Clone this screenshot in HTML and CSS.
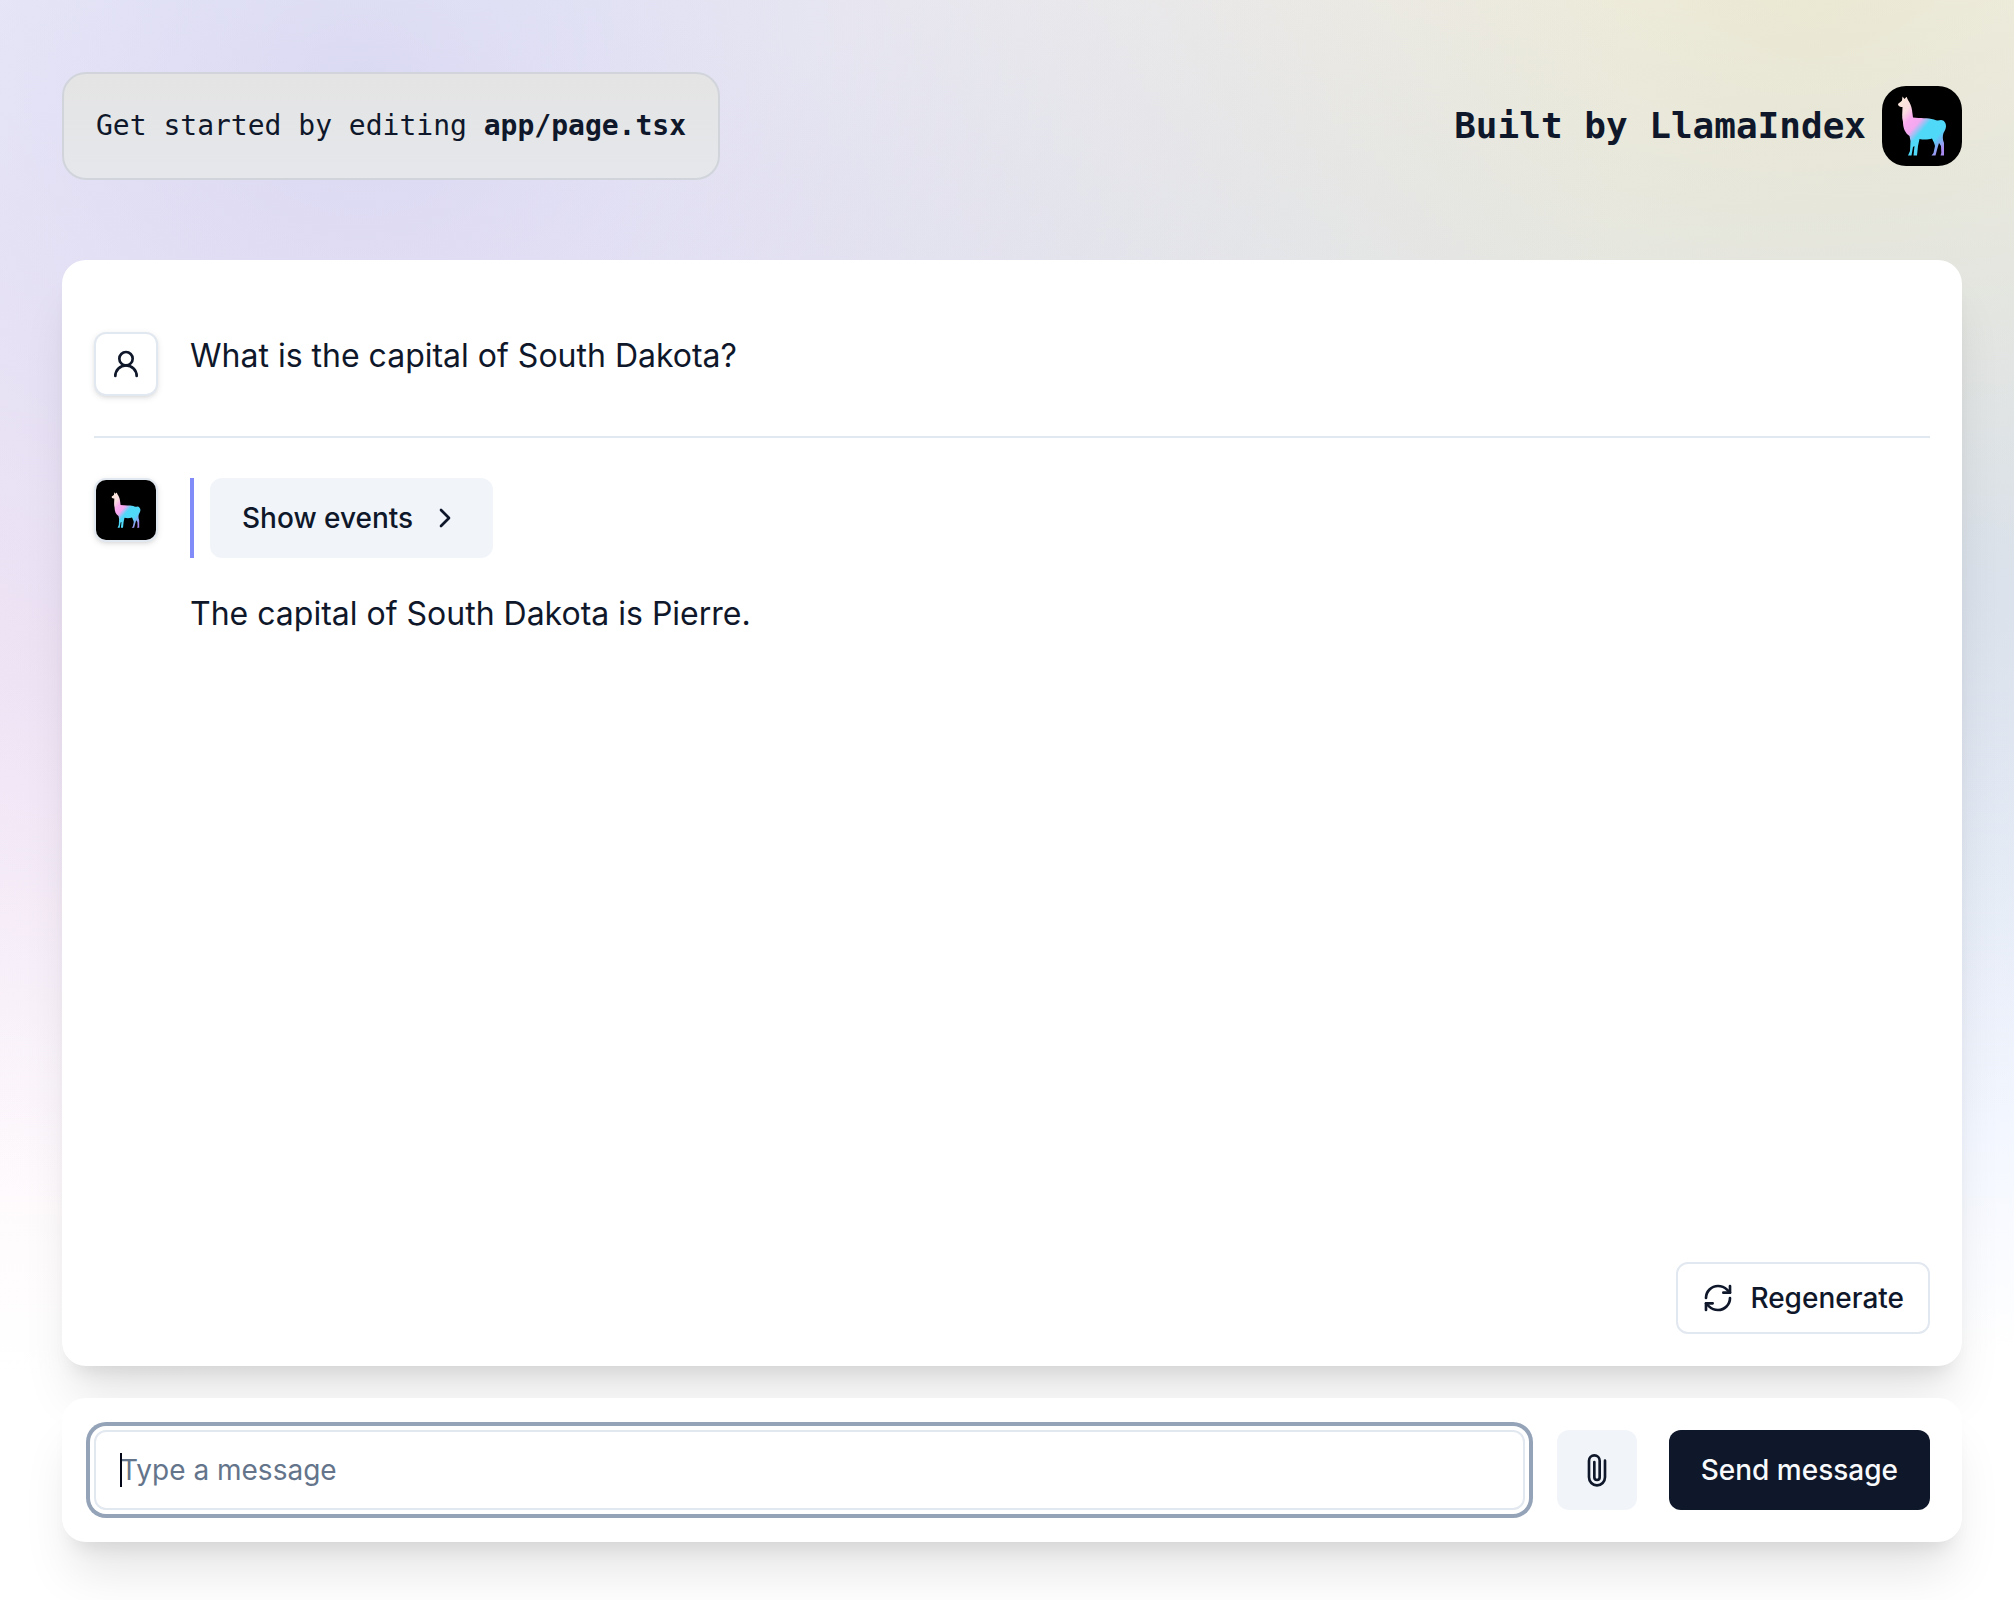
FILE: index.html
```html
<!DOCTYPE html>
<html lang="en">
<head>
<meta charset="utf-8">
<meta name="viewport" content="width=device-width, initial-scale=1">
<title>LlamaIndex Chat</title>
<link rel="stylesheet" href="styles.css">
</head>
<body>
<svg class="defs" aria-hidden="true">
  <defs>
    <linearGradient id="fur" gradientUnits="userSpaceOnUse" x1="20" y1="16" x2="66" y2="56">
      <stop offset="0" stop-color="#fbe6dc"/>
      <stop offset=".14" stop-color="#fbdde0"/>
      <stop offset=".28" stop-color="#fbaaf0"/>
      <stop offset=".42" stop-color="#f3a8f0"/>
      <stop offset=".56" stop-color="#4fd8f8"/>
      <stop offset=".8" stop-color="#4fd8f8"/>
      <stop offset="1" stop-color="#a98af0"/>
    </linearGradient>
    <symbol id="llama" viewBox="0 0 80 80">
      <path fill="url(#fur)" d="M20.500 10.500L22.500 13L24.500 10.800L26 14C28 17 29.500 20 30 24L31 31.500C38 32.500 46 31.500 52 33.500C55 35 57 34.500 59 34C62 34 64 37 64 40C64 43 62.500 45 61.500 47C60.500 50 60.500 53 62 57L62 69.500L58.500 69.500L59.300 67L59 60L57 57L55.500 62L53.500 69.500L49.500 69.500L51.500 67L53 60C52.500 57 51 55 50 52.500C46 54 41 53.800 37.500 53L36 60L35 69.500L31.500 69.500L32.500 60L31 61L29.500 69.500L26 69.500L28 65L28.500 55L27.500 50C23 47 21 42 21 36C19.500 31 20.500 26 20.500 21C18.500 21 16.500 20.500 16 18.500C16 17 18.500 16.500 20 14.500Z"/>
    </symbol>
  </defs>
</svg>
<main class="page">
  <header class="header">
    <p class="hint">Get started by editing <code class="hint-file">app/page.tsx</code></p>
    <a class="brand" href="https://www.llamaindex.ai/">
      <span>Built by LlamaIndex</span>
      <svg class="brand-logo" role="img" aria-label="Llama logo"><use href="#llama"/></svg>
    </a>
  </header>

  <section class="card chat" aria-label="Conversation">
    <div class="messages">
      <article class="message">
        <div class="avatar">
          <svg class="icon" viewBox="0 0 24 24" aria-hidden="true"><circle cx="12" cy="8" r="5"/><path d="M20 21a8 8 0 0 0-16 0"/></svg>
        </div>
        <p class="message-text">What is the capital of South Dakota?</p>
      </article>
      <article class="message">
        <div class="avatar"><svg class="avatar-logo" role="img" aria-label="Assistant"><use href="#llama"/></svg></div>
        <div class="message-body">
          <div class="events">
            <button class="button button-soft" type="button">
              Show events
              <svg class="icon" viewBox="0 0 24 24" aria-hidden="true"><path d="m9 18 6-6-6-6"/></svg>
            </button>
          </div>
          <p class="message-text">The capital of South Dakota is Pierre.</p>
        </div>
      </article>
    </div>
    <div class="actions">
      <button class="button button-outline" type="button">
        <svg class="icon" viewBox="0 0 24 24" aria-hidden="true"><path d="M3 12a9 9 0 0 1 9-9 9.750 9.750 0 0 1 6.740 2.740L21 8"/><path d="M21 3v5h-5"/><path d="M21 12a9 9 0 0 1-9 9 9.750 9.750 0 0 1-6.740-2.740L3 16"/><path d="M8 16H3v5"/></svg>
        Regenerate
      </button>
    </div>
  </section>

  <form class="card composer">
    <div class="field">
      <input class="field-input" type="text" name="message" aria-label="Message" placeholder="Type a message">
      <span class="caret" aria-hidden="true"></span>
    </div>
    <button class="button button-soft button-square" type="button" aria-label="Attach a file">
      <svg class="icon" viewBox="0 0 24 24" aria-hidden="true"><path d="M18 5v12.500a6 6 0 0 1-12 0V5a4 4 0 0 1 8 0v12.500a2 2 0 0 1-4 0V6"/></svg>
    </button>
    <button class="button button-primary" type="submit">Send message</button>
  </form>
</main>
</body>
</html>
```
FILE: styles.css
```css
*, *::before, *::after {
  box-sizing: border-box;
}

body {
  margin: 0;
  color: #0f172a;
  font-family: Inter, sans-serif;
  font-size: 28px;
  line-height: 40px;
  background-color: #fff;
}

p {
  margin: 0;
}

.defs {
  position: absolute;
  width: 0;
  height: 0;
}

.page {
  display: flex;
  flex-direction: column;
  min-height: 100vh;
  padding: 72px 52px 58px 62px;
  background-image:
    radial-gradient(at 18% 6%, rgba(186, 186, 233, 0.53) 0, transparent 54%),
    radial-gradient(at 90% 0, hsla(50, 50%, 77%, 0.5) 0, transparent 50%),
    radial-gradient(at 94% 36%, rgba(194, 213, 255, 0.68) 0, transparent 54%),
    radial-gradient(at 6% 42%, rgba(251, 218, 239, 0.46) 0, transparent 54%);
}

.header {
  display: flex;
  align-items: center;
  justify-content: space-between;
  margin-bottom: 80px;
  font-family: "DejaVu Sans Mono", monospace;
}

.hint {
  padding: 32px;
  border: 2px solid #d1d5db;
  border-radius: 24px;
  background: linear-gradient(#e4e4e4, #e5e7eb);
}

.hint-file {
  font-family: inherit;
  font-weight: 700;
}

.brand {
  display: flex;
  align-items: center;
  gap: 16px;
  color: inherit;
  font-size: 36px;
  font-weight: 700;
  text-decoration: none;
}

.brand-logo {
  width: 80px;
  height: 80px;
  border-radius: 24px;
  background: #000;
}

.card {
  padding: 32px;
  border-radius: 24px;
  background: #fff;
  box-shadow:
    0 40px 50px -10px rgba(0, 0, 0, 0.1),
    0 16px 20px -12px rgba(0, 0, 0, 0.1);
}

.chat {
  display: flex;
  flex: 1;
  flex-direction: column;
}

.messages {
  flex: 1;
}

.message {
  display: flex;
  align-items: flex-start;
  gap: 32px;
  padding: 40px 0;
}

.message + .message {
  border-top: 2px solid #e2e8f0;
}

.avatar {
  display: flex;
  align-items: center;
  justify-content: center;
  width: 64px;
  height: 64px;
  border: 2px solid #e2e8f0;
  border-radius: 12px;
  background: #fff;
  box-shadow: 0 2px 6px rgba(0, 0, 0, 0.1), 0 2px 4px -2px rgba(0, 0, 0, 0.1);
}

.avatar-logo {
  width: 60px;
  height: 60px;
  padding: 6px;
  border-radius: 10px;
  background: #000;
}

.message-text {
  font-size: 32px;
  line-height: 48px;
}

.message-body {
  display: grid;
  gap: 32px;
}

.events {
  padding-left: 16px;
  border-left: 4px solid #818cf8;
}

.icon {
  flex: none;
  width: 32px;
  height: 32px;
  overflow: visible;
  fill: none;
  stroke: currentColor;
  stroke-width: 2;
  stroke-linecap: round;
  stroke-linejoin: round;
}

.button {
  display: inline-flex;
  align-items: center;
  justify-content: center;
  gap: 16px;
  height: 80px;
  padding: 0 32px;
  border: 0;
  border-radius: 12px;
  color: #0f172a;
  font: 500 28px/40px Inter, sans-serif;
  white-space: nowrap;
}

.events .button {
  display: flex;
}

.button-soft {
  background: #f1f5f9;
}

.button-outline {
  height: 72px;
  padding: 0 24px;
  border: 2px solid #e2e8f0;
  background: #fff;
}

.button-square {
  width: 80px;
  padding: 0;
}

.button-primary {
  color: #f8fafc;
  background: #0f172a;
}

.actions {
  display: flex;
  justify-content: flex-end;
}

.composer {
  display: flex;
  gap: 32px;
  margin-top: 32px;
}

.field {
  position: relative;
  flex: 1;
}

.field-input {
  width: 100%;
  height: 80px;
  padding: 0 24px;
  border: 2px solid #e2e8f0;
  border-radius: 12px;
  outline: 0;
  background: #fff;
  color: inherit;
  font: 400 28px/40px Inter, sans-serif;
  box-shadow: 0 0 0 4px #fff, 0 0 0 8px #94a3b8;
}

.field-input::placeholder {
  color: #64748b;
  opacity: 1;
}

.caret {
  position: absolute;
  top: 23px;
  left: 26px;
  width: 2px;
  height: 34px;
  background: #020617;
}

.field:focus-within .caret {
  display: none;
}
```
